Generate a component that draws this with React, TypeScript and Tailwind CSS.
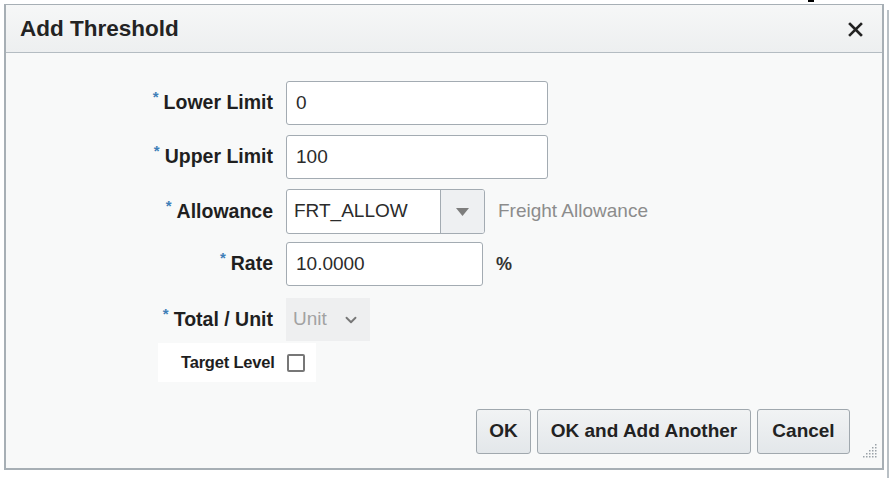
import { FiChevronDown } from 'react-icons/fi'

const font = { fontFamily: '"Liberation Sans", Arial, sans-serif' }

function Label({ text }: { text: string }) {
  return (
    <div className="flex w-[267px] shrink-0 items-center justify-end">
      <span className="mr-[5px] -mt-[13px] text-[15px] font-bold leading-none text-[#3f7fb8]">*</span>
      <span className="text-[19.5px] font-bold leading-none text-[#1f1f1f]">{text}</span>
    </div>
  )
}

function TextInput({ value, width }: { value: string; width: string }) {
  return (
    <div
      className={`${width} flex h-[44px] items-center rounded-[3px] border border-[#a3abb2] bg-white px-[9px] text-[19px] text-[#2b2b2b]`}
    >
      {value}
    </div>
  )
}

function ResizeGrip() {
  const dots: [number, number][] = []
  for (let r = 0; r < 5; r++) {
    for (let c = 4 - r; c < 5; c++) dots.push([c * 3 + 1, r * 3 + 1])
  }
  return (
    <svg width="15" height="15" viewBox="0 0 15 15">
      {dots.map(([x, y]) => (
        <rect key={`${x}-${y}`} x={x} y={y} width="1.5" height="1.5" fill="#9aa2a8" />
      ))}
    </svg>
  )
}

export default function App() {
  return (
    <div className="relative h-[478px] w-[892px] overflow-hidden bg-white" style={font}>
      <div className="absolute left-[808px] top-0 h-[2px] w-[6px] bg-black" />
      <div className="absolute left-[887px] top-[10px] h-[468px] w-[2px] bg-[#b9c0c5]" />

      <div className="pl-[4px] pt-[4px]">
        <div className="flex h-[466px] w-[880px] flex-col border-2 border-t border-[#a7afb5] bg-[#f8f9f9]">
          {/* header */}
          <div className="flex h-[48px] shrink-0 items-center justify-between border-b border-[#b4bcc2] bg-gradient-to-b from-[#f6f7f7] to-[#edeff0] pl-[14px] pr-[19px]">
            <span className="text-[22.5px] font-bold text-[#232323]">Add Threshold</span>
            <svg width="15" height="15" viewBox="0 0 15 15" className="mt-[1px]">
              <path d="M2 2 L13 13 M13 2 L2 13" stroke="#222" strokeWidth="2.6" strokeLinecap="square" />
            </svg>
          </div>

          {/* body */}
          <div className="flex flex-1 flex-col pt-[28px]">
            <div className="flex items-center gap-[13px]">
              <Label text="Lower Limit" />
              <TextInput value="0" width="w-[262px]" />
            </div>
            <div className="mt-[10px] flex items-center gap-[13px]">
              <Label text="Upper Limit" />
              <TextInput value="100" width="w-[262px]" />
            </div>
            <div className="mt-[10px] flex items-center gap-[13px]">
              <Label text="Allowance" />
              <div className="flex h-[45px] w-[199px] overflow-hidden rounded-[3px] border border-[#a3abb2] bg-white">
                <div className="flex flex-1 items-center px-[7px] text-[19px] text-[#2b2b2b]">FRT_ALLOW</div>
                <div className="flex w-[44px] items-center justify-center border-l border-[#a3abb2] bg-[#eef0f2]">
                  <svg width="13" height="8" viewBox="0 0 13 8">
                    <path d="M0 0 L13 0 L6.5 8 Z" fill="#7d7d7d" />
                  </svg>
                </div>
              </div>
              <span className="text-[19px] text-[#8c8c8c]">Freight Allowance</span>
            </div>
            <div className="mt-[8px] flex items-center gap-[13px]">
              <Label text="Rate" />
              <TextInput value="10.0000" width="w-[197px]" />
              <span className="text-[18px] font-bold text-[#333]">%</span>
            </div>
            <div className="mt-[12px] flex items-center gap-[13px]">
              <Label text="Total / Unit" />
              <div className="flex h-[43px] w-[84px] items-center justify-between bg-[#eeeff0] pl-[7px] pr-[10px] text-[19px] text-[#a2a2a2]">
                <span>Unit</span>
                <FiChevronDown className="text-[18px] text-[#777]" strokeWidth={2.5} />
              </div>
            </div>
            <div className="ml-[152px] mt-[2px] flex h-[39px] w-[158px] items-center bg-white pl-[23px]">
              <span className="text-[16.5px] font-bold tracking-[-0.2px] text-[#1e1e1e]">Target Level</span>
              <div className="ml-[12px] h-[18px] w-[18px] rounded-[2px] border-2 border-[#777] bg-white" />
            </div>

            {/* footer */}
            <div className="mt-auto flex items-end justify-end pb-[10px] pr-[5px]">
              <div className="mb-[4px] flex gap-[6px]">
                {['OK', 'OK and Add Another', 'Cancel'].map((b) => (
                  <button
                    key={b}
                    type="button"
                    className={`h-[45px] rounded-[3px] border border-[#a0a8ae] bg-gradient-to-b from-[#f1f3f4] to-[#e3e7ea] text-[19px] font-bold text-[#222] ${
                      b === 'OK' ? 'w-[55px]' : b === 'Cancel' ? 'w-[93px]' : 'w-[214px]'
                    }`}
                  >
                    {b}
                  </button>
                ))}
              </div>
              <div className="ml-[12px]">
                <ResizeGrip />
              </div>
            </div>
          </div>
        </div>
      </div>
    </div>
  )
}
